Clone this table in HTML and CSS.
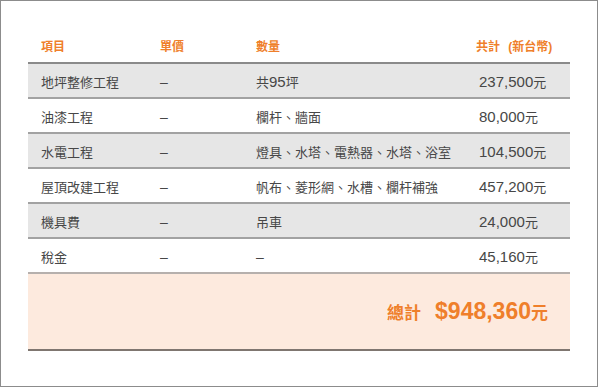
FILE: index.html
```html
<!DOCTYPE html>
<html lang="zh-Hant">
<head>
<meta charset="utf-8">
<link rel="stylesheet" href="styles.css">
</head>
<body>
<div class="frame">
  <div class="table">
    <div class="row head">
      <div>項目</div><div>單價</div><div>數量</div><div class="sum">共計 (新台幣)</div>
    </div>
    <div class="row gray">
      <div>地坪整修工程</div><div class="dash">–</div><div>共<span class="n">95</span>坪</div><div><span class="n">237,500</span>元</div>
    </div>
    <div class="row">
      <div>油漆工程</div><div class="dash">–</div><div>欄杆、牆面</div><div><span class="n">80,000</span>元</div>
    </div>
    <div class="row gray">
      <div>水電工程</div><div class="dash">–</div><div>燈具、水塔、電熱器、水塔、浴室</div><div><span class="n">104,500</span>元</div>
    </div>
    <div class="row">
      <div>屋頂改建工程</div><div class="dash">–</div><div>帆布、菱形網、水槽、欄杆補強</div><div><span class="n">457,200</span>元</div>
    </div>
    <div class="row gray">
      <div>機具費</div><div class="dash">–</div><div>吊車</div><div><span class="n">24,000</span>元</div>
    </div>
    <div class="row last">
      <div>稅金</div><div class="dash">–</div><div class="dash">–</div><div><span class="n">45,160</span>元</div>
    </div>
    <div class="total">
      <span class="tlabel">總計</span><span class="tamount">$948,360</span><span class="tunit">元</span>
    </div>
  </div>
</div>
</body>
</html>
```

FILE: styles.css
```css
html, body {
  margin: 0;
  padding: 0;
  background: #fff;
}
.frame {
  width: 598px;
  height: 387px;
  box-sizing: border-box;
  border: 1px solid #8c8c8c;
  padding: 28px 27px 0 27px;
  font-family: "Liberation Sans", "Noto Sans CJK TC", sans-serif;
  color: #474747;
}
.table {
  width: 542px;
}
.row {
  display: grid;
  grid-template-columns: 119px 96px 223px 1fr;
  align-items: center;
  padding-left: 13px;
  padding-top: 2px;
  height: 31px;
  border-bottom: 2px solid #a2a2a2;
  font-size: 13px;
}
.row.gray {
  background: #e6e6e6;
}
.row.last {
  border-bottom-color: #b6b0ad;
}
.row .n {
  font-size: 15px;
}
.dash {
  font-size: 14px;
}
.head {
  font-size: 12px;
  font-weight: bold;
  color: #ef7f2b;
  border-bottom-color: #8a8a8a;
  padding-top: 0;
  height: 33px;
}
.head .sum {
  margin-left: -3px;
  word-spacing: 5px;
}
.total {
  display: flex;
  justify-content: flex-end;
  align-items: baseline;
  height: 75px;
  line-height: 75px;
  padding-right: 22px;
  background: #fdeade;
  border-bottom: 2px solid #7f7670;
  color: #ef7f2b;
  font-weight: bold;
}
.tlabel {
  font-size: 17px;
  margin-right: 14px;
}
.tamount {
  font-size: 23px;
}
.tunit {
  font-size: 17px;
}
```
